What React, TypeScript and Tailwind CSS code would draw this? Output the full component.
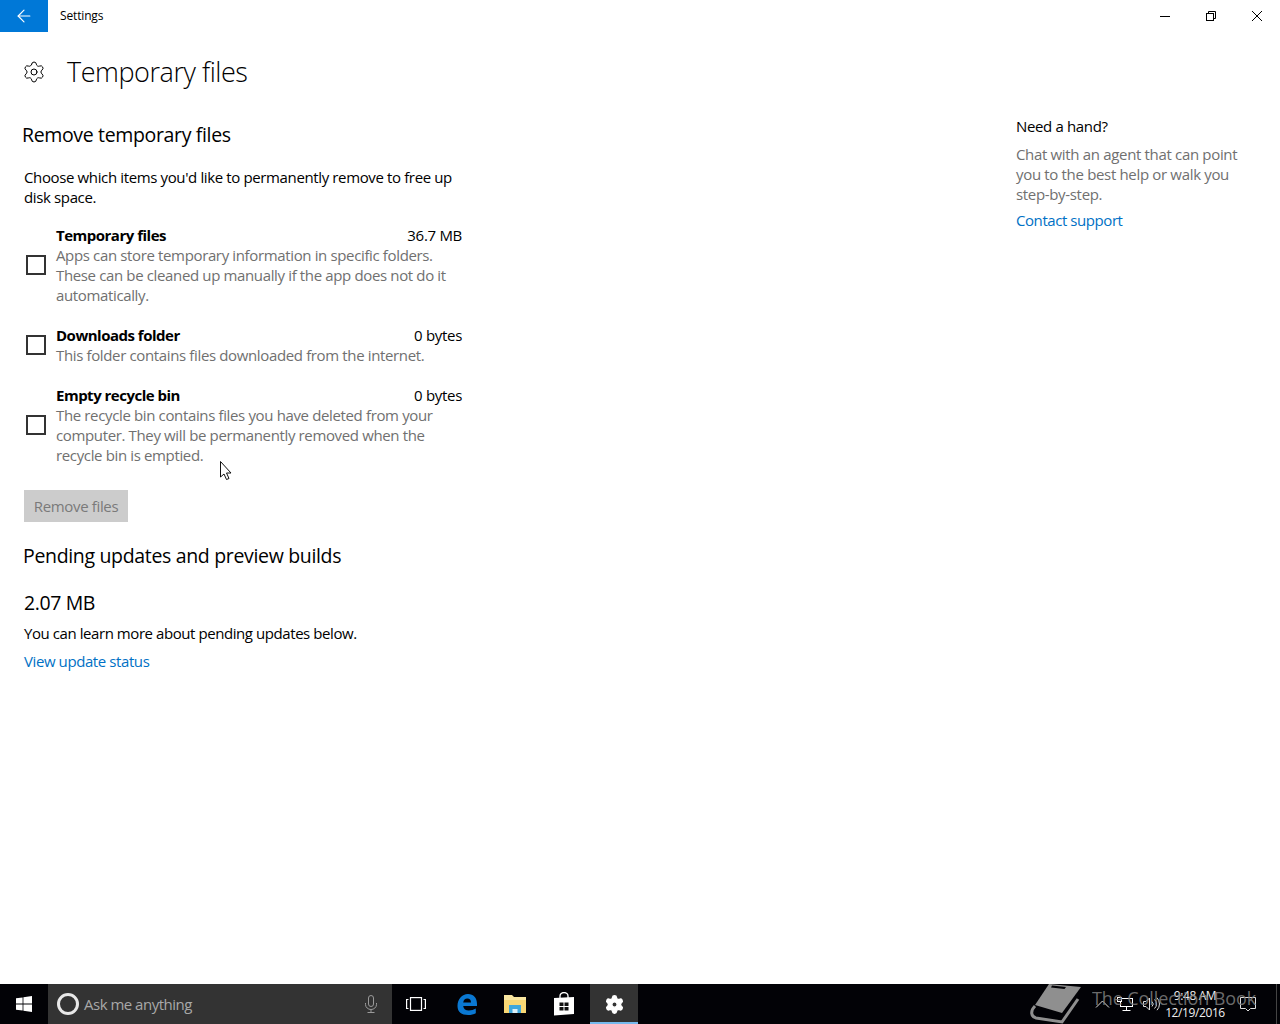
import React from 'react';
import { ArrowLeft, Settings } from 'lucide-react';

const font = "font-['Open_Sans','Noto_Sans',sans-serif]";

const items = [
  {
    title: 'Temporary files',
    size: '36.7 MB',
    lines: ['Apps can store temporary information in specific folders.', 'These can be cleaned up manually if the app does not do it', 'automatically.'],
  },
  {
    title: 'Downloads folder',
    size: '0 bytes',
    lines: ['This folder contains files downloaded from the internet.'],
  },
  {
    title: 'Empty recycle bin',
    size: '0 bytes',
    lines: ['The recycle bin contains files you have deleted from your', 'computer. They will be permanently removed when the', 'recycle bin is emptied.'],
  },
];

const FileRow = ({ item }: { item: (typeof items)[number] }) => (
  <div className="flex items-center w-[438px]">
    <div className="w-5 h-5 border-2 border-[#333] ml-[2px] mr-[10px] shrink-0" />
    <div className="flex-1">
      <div className="flex justify-between h-5 leading-5">
        <span className="font-bold text-black tracking-[-0.5px]">{item.title}</span>
        <span className="text-black tracking-[-0.3px]">{item.size}</span>
      </div>
      {item.lines.map((l) => (
        <div key={l} className="h-5 leading-5 text-[#707070] whitespace-nowrap tracking-[-0.36px]">{l}</div>
      ))}
    </div>
  </div>
);

const TaskIcon = ({ children, active, className = '' }: { children: React.ReactNode; active?: boolean; className?: string }) => (
  <div className={`w-12 h-10 flex items-center justify-center relative ${active ? 'bg-[#333333]' : ''} ${className}`}>
    {children}
    {active && <div className="absolute bottom-0 left-0 right-0 h-[2px] bg-[#76b9ed]" />}
  </div>
);

export default function App() {
  return (
    <div className={`relative h-screen w-full flex flex-col bg-white overflow-hidden text-[15px] ${font}`}>
      {/* Title bar */}
      <div className="h-8 flex items-center shrink-0">
        <div className="w-12 h-8 bg-[#0078d7] flex items-center justify-center">
          <ArrowLeft size={20} color="#fff" strokeWidth={1.4} />
        </div>
        <span className="ml-3 text-xs text-black tracking-[-0.15px]">Settings</span>
        <div className="ml-auto flex items-center">
          <div className="w-[46px] h-8 flex items-center justify-center">
            <svg width="10" height="10" viewBox="0 0 10 10" stroke="#000" strokeWidth="1">
              <path d="M0 5.500H10" />
            </svg>
          </div>
          <div className="w-[46px] h-8 flex items-center justify-center">
            <svg width="10" height="10" viewBox="0 0 10 10" fill="none" stroke="#000" strokeWidth="1">
              <rect x="0.5" y="2.5" width="7" height="7" />
              <path d="M2.5 2.5V0.5H9.5V7.5H7.5" />
            </svg>
          </div>
          <div className="w-[46px] h-8 flex items-center justify-center">
            <svg width="10" height="10" viewBox="0 0 10 10" stroke="#000" strokeWidth="1">
              <path d="M0 0 10 10M10 0 0 10" />
            </svg>
          </div>
        </div>
      </div>

      {/* Content */}
      <div className="flex-1 flex min-h-0">
        <div className="flex-1 pl-6">
          <div className="flex items-center h-10 mt-5 -ml-[2px]">
            <Settings size={24} strokeWidth={1} color="#000" />
            <h1 className="ml-[21px] text-[27px] font-light text-black tracking-[-0.45px]">Temporary files</h1>
          </div>
          <h2 className="mt-[29px] -ml-[2px] text-[19.5px] leading-7 text-black tracking-[-0.35px]">Remove temporary files</h2>
          <p className="mt-[18px] leading-5 text-black whitespace-nowrap tracking-[-0.37px]">
            Choose which items you'd like to permanently remove to free up<br />disk space.
          </p>
          <div className="mt-[18px] flex flex-col gap-5">
            {items.map((item) => (
              <FileRow key={item.title} item={item} />
            ))}
          </div>
          <div className="mt-[25px] w-[104px] h-8 bg-[#cccccc] text-[#7a7a7a] flex items-center justify-center tracking-[-0.35px]">Remove files</div>
          <h2 className="mt-5 -ml-[1px] text-[19.5px] leading-7 text-black tracking-[-0.33px]">Pending updates and preview builds</h2>
          <div className="mt-[21px] text-[19.5px] leading-6 text-black tracking-[-0.4px]">2.07 MB</div>
          <p className="mt-2 leading-5 text-black tracking-[-0.43px]">You can learn more about pending updates below.</p>
          <a className="block mt-2 leading-5 text-[#0071c5] tracking-[-0.41px]">View update status</a>
        </div>
        <div className="w-[264px] shrink-0 pt-[84px]">
          <div className="leading-5 text-black tracking-[-0.35px]">Need a hand?</div>
          <p className="mt-2 leading-5 text-[#707070] whitespace-nowrap tracking-[-0.33px]">
            Chat with an agent that can point<br />you to the best help or walk you<br />step-by-step.
          </p>
          <a className="block mt-[6px] leading-5 text-[#0071c5] tracking-[-0.43px]">Contact support</a>
        </div>
      </div>

      {/* Taskbar */}
      <div className="relative h-10 bg-[#020206] flex items-center shrink-0 text-white overflow-hidden">
        <div className="w-12 h-10 flex items-center justify-center">
          <svg width="16" height="16" viewBox="0 0 16 16" fill="#fff">
            <path d="M0 2.3 6.6 1.4V7.6H0ZM7.4 1.3 16 0V7.6H7.4ZM0 8.4H6.6V14.6L0 13.7ZM7.4 8.4H16V16L7.4 14.7Z" />
          </svg>
        </div>
        <div className="w-[344px] h-10 bg-[#333333] flex items-center pl-[9px] pr-[14px]">
          <div className="w-[22px] h-[22px] rounded-full border-[3px] border-[#e8e8e8]" />
          <span className="ml-[5px] text-[15px] text-[#a8a8a8] tracking-[-0.5px]">Ask me anything</span>
          <svg className="ml-auto" width="14" height="18" viewBox="0 0 14 18" fill="none" stroke="#9a9a9a" strokeWidth="1">
            <rect x="4.5" y="0.5" width="5" height="11" rx="2.5" />
            <path d="M1.5 8V9.5A5.5 5 0 0 0 12.5 9.5V8M7 14.5V17M3.5 17.5H10.5" />
          </svg>
        </div>
        <TaskIcon>
          <svg width="20" height="14" viewBox="0 0 20 14" fill="none" stroke="#fff" strokeWidth="1.2">
            <rect x="4.5" y="0.6" width="11" height="12.8" />
            <path d="M2.5 2.5H0.6V11.5H2.5M17.5 2.5H19.4V11.5H17.5" />
          </svg>
        </TaskIcon>
        <TaskIcon className="ml-[3px]">
          <svg width="24" height="24" viewBox="0 0 24 24" fill="none">
            <path d="M2.5 14C2.5 7 7 2 13 2c5.5 0 9 3.8 9 10v2H8.2c.3 3 2.6 4.6 5.6 4.6 2.6 0 5-.7 7-2v4.6c-2 1.2-4.6 1.8-7.6 1.8C6.500 23 2.500 20 2.500 14Zm5.700-3.500H16c0-2.600-1.300-4-3.700-4-2.200 0-3.700 1.500-4.100 4Z" fill="#0a78d2" />
          </svg>
        </TaskIcon>
        <TaskIcon>
          <svg width="22" height="20" viewBox="0 0 22 20">
            <path d="M0 1H8L10 3H22V19H0Z" fill="#f9e6a0" />
            <path d="M0 6H22V19H0Z" fill="#f8d774" />
            <path d="M5 11H17V19H5Z" fill="#3fa7dc" />
            <path d="M8.500 15H13.500V19H8.500Z" fill="#dff0f8" />
          </svg>
        </TaskIcon>
        <TaskIcon className="ml-[1px]">
          <svg width="20" height="24" viewBox="0 0 20 24" fill="none">
            <path d="M6 6V4a4 3.500 0 0 1 8 0V6" stroke="#fff" strokeWidth="1.300" />
            <path d="M0 6 20 5V22L0 23.500Z" fill="#fff" />
            <path d="M5.500 10.500H9.500V14H5.500ZM10.500 10.500H14.500V14H10.500ZM5.500 15H9.500V18.500H5.500ZM10.500 15H14.500V18.500H10.500Z" fill="#111" />
          </svg>
        </TaskIcon>
        <TaskIcon active className="ml-[2px]">
          <Settings size={21} color="#fff" fill="#fff" strokeWidth={1.5} className="[&>circle]:fill-[#333333]" />
        </TaskIcon>
        <div className="ml-auto flex items-center h-10 relative">
          <svg className="mr-[7px]" width="15" height="8" viewBox="0 0 15 8" fill="none" stroke="#ddd">
            <path d="M1 7.500 7.500 1 14 7.500" />
          </svg>
          <svg className="mr-[10px]" width="16" height="15" viewBox="0 0 16 15" fill="none" stroke="#fff">
            <rect x="3.500" y="1.500" width="12" height="8" />
            <rect x="0.500" y="0.500" width="4" height="4" fill="#020206" />
            <path d="M9.500 9.500V13M5.500 13.500H13.500" />
          </svg>
          <svg className="mr-[5px]" width="17" height="14" viewBox="0 0 17 14" fill="none" stroke="#ddd">
            <path d="M0.500 4.500H3L6.500 1V13L3 9.500H0.500Z" />
            <path d="M9 4.500a3.500 3.500 0 0 1 0 5M11.500 2.500a6 6 0 0 1 0 9M14 0.800a9 9 0 0 1 0 12.400" />
          </svg>
          <div className="w-[62px] mr-[6px] text-[12px] leading-[17px] text-center text-[#f0f0f0] tracking-[-0.4px] whitespace-nowrap -mt-[1px] -translate-x-[1px]">
            <div>9:48 AM</div>
            <div>12/19/2016</div>
          </div>
          <div className="w-[30px] mr-[13px] flex justify-center">
            <svg width="16" height="15" viewBox="0 0 16 15" fill="none" stroke="#ddd">
              <path d="M0.500 0.500H15.500V11.500H10.500L8 14 5.500 11.500H0.500Z" />
            </svg>
          </div>
          <div className="w-[1px] h-10 bg-[#444] mr-[3px]" />
        </div>

        {/* Watermark over the taskbar */}
        <div className="absolute left-[1025px] top-0 h-10 flex items-center pointer-events-none">
          <svg width="60" height="40" viewBox="0 0 60 40" fill="none">
            <path d="M24 0 56 3 37 29 10 21Z" fill="#8f8f8f" />
            <path d="M10 22C5 27 6 33 11 34L37 38 53 15" stroke="#8f8f8f" strokeWidth="3" />
            <path d="M27 1.500 41 3 39.500 5 26 3.500Z" fill="#020206" />
          </svg>
          <span className="ml-[7px] -mt-[12px] text-[18px] text-[#7d7d7d] opacity-85 whitespace-nowrap tracking-[-0.1px]">The Collection Book</span>
        </div>
      </div>

      {/* Mouse cursor */}
      <svg className="absolute left-[220px] top-[461px]" width="13" height="20" viewBox="0 0 13 20" fill="#fff" stroke="#111" strokeWidth="1">
        <path d="M0.500 0.500V16L4 13 6.500 18.500 9 17.500 6.500 12H11Z" />
      </svg>
    </div>
  );
}
